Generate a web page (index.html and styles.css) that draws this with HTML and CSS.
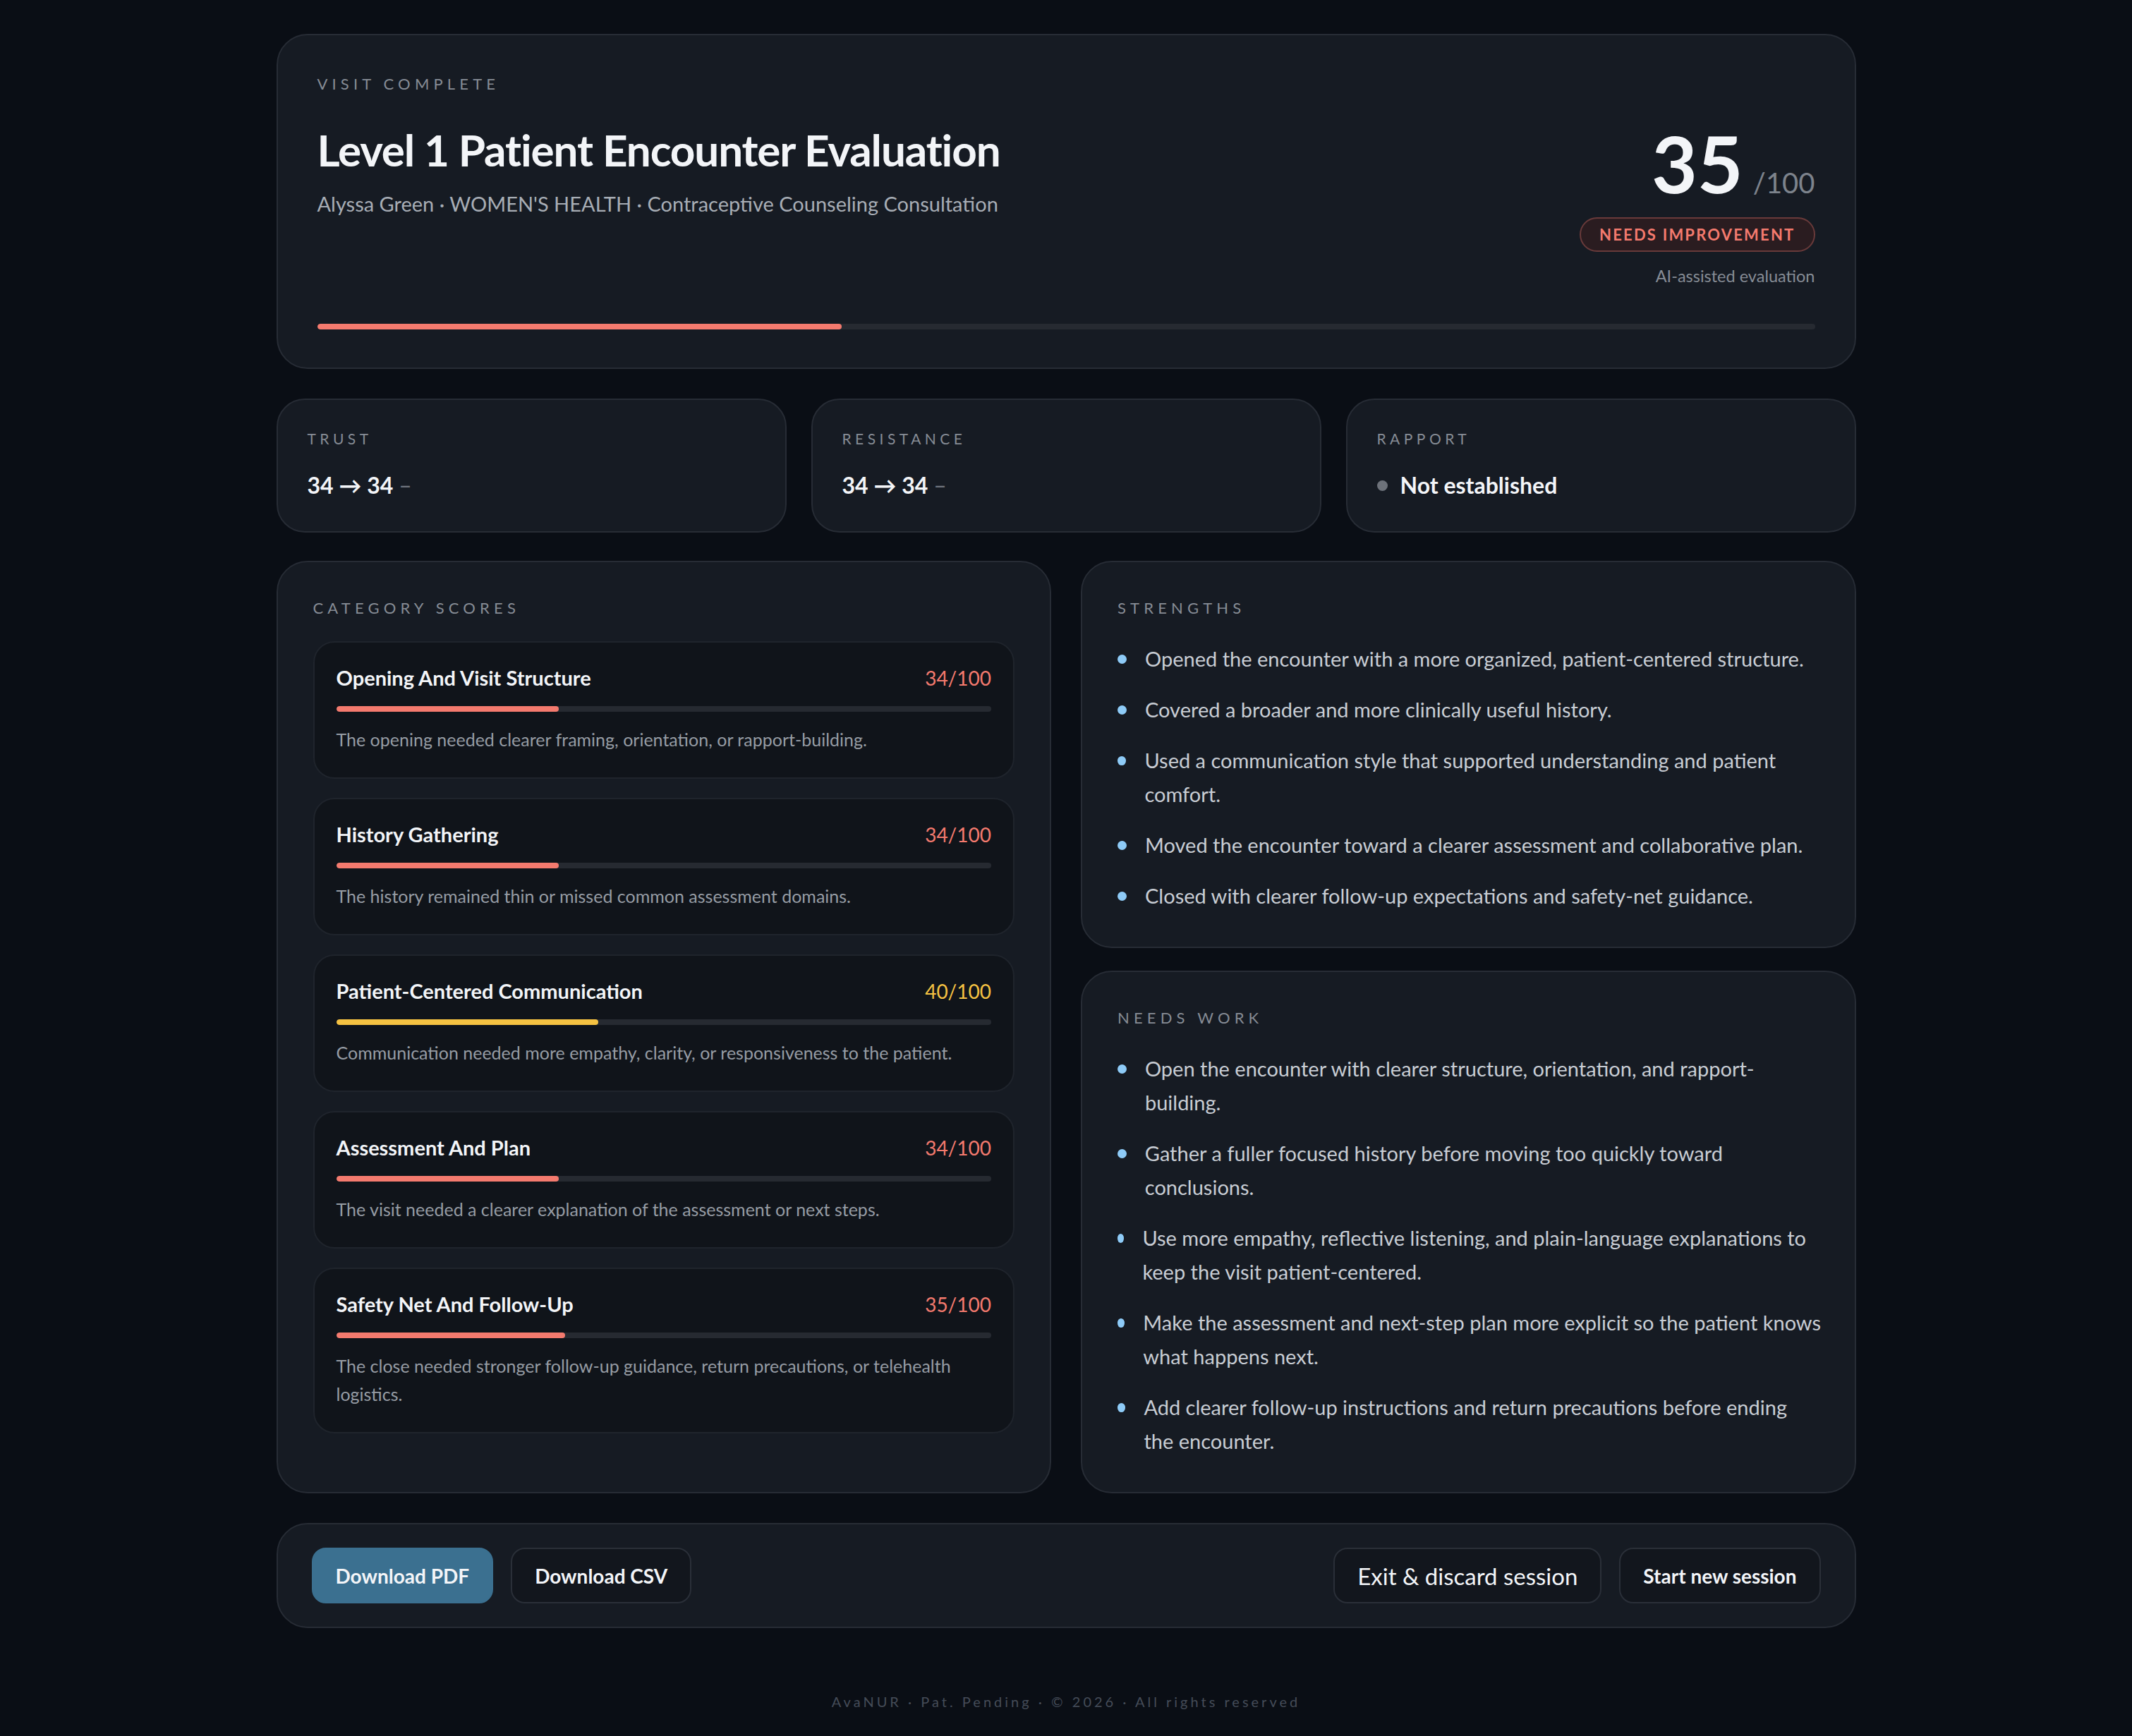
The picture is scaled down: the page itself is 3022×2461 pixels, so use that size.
FILE: index.html
```html
<!DOCTYPE html>
<html lang="en">
     <head>
          <meta charset="UTF-8">
          <meta name="viewport" content="width=device-width, initial-scale=1.0">
          <title>Visit Complete</title>
          <link rel="stylesheet" href="styles.css">
     </head>
     <body>
          <main class="page">
               <section class="card hero">
                    <div class="hero-top">
                         <div class="hero-text">
                              <div class="eyebrow eyebrow-lg">Visit complete</div>
                              <h1>Level 1 Patient Encounter Evaluation</h1>
                              <p class="hero-meta">Alyssa Green · WOMEN'S HEALTH · Contraceptive Counseling Consultation</p>
                         </div>
                         <div class="hero-score">
                              <div class="score"><span class="score-num">35</span><span class="score-max">/100</span></div>
                              <span class="badge">Needs improvement</span>
                              <div class="score-note">AI-assisted evaluation</div>
                         </div>
                    </div>
                    <div class="bar hero-bar"><div class="bar-fill red" style="width: 35%"></div></div>
               </section>

               <section class="stats">
                    <div class="card stat">
                         <div class="eyebrow">Trust</div>
                         <div class="stat-value">34 → 34 <span class="delta">–</span></div>
                    </div>
                    <div class="card stat">
                         <div class="eyebrow">Resistance</div>
                         <div class="stat-value">34 → 34 <span class="delta">–</span></div>
                    </div>
                    <div class="card stat">
                         <div class="eyebrow">Rapport</div>
                         <div class="stat-value"><span class="rapport-dot"></span>Not established</div>
                    </div>
               </section>

               <section class="columns">
                    <div class="card panel">
                         <div class="eyebrow eyebrow-lg">Category scores</div>
                         <div class="cat-list" id="catList"></div>
                    </div>
                    <div class="side">
                         <div class="card panel panel-list">
                              <div class="eyebrow eyebrow-lg">Strengths</div>
                              <ul class="bullets" id="strengthsList"></ul>
                         </div>
                         <div class="card panel panel-list">
                              <div class="eyebrow eyebrow-lg">Needs work</div>
                              <ul class="bullets" id="needsList"></ul>
                         </div>
                    </div>
               </section>

               <section class="card actions">
                    <div class="btn-group">
                         <button class="btn btn-primary">Download PDF</button>
                         <button class="btn">Download CSV</button>
                    </div>
                    <div class="btn-group">
                         <button class="btn btn-light">Exit &amp; discard session</button>
                         <button class="btn">Start new session</button>
                    </div>
               </section>

               <footer class="footer">AvaNUR · Pat. Pending · © 2026 · All rights reserved</footer>
          </main>
          <script>
          document.addEventListener('DOMContentLoaded', function () {
               const categories = [
                    { name: 'Opening And Visit Structure', score: 34, note: 'The opening needed clearer framing, orientation, or rapport-building.' },
                    { name: 'History Gathering', score: 34, note: 'The history remained thin or missed common assessment domains.' },
                    { name: 'Patient-Centered Communication', score: 40, note: 'Communication needed more empathy, clarity, or responsiveness to the patient.' },
                    { name: 'Assessment And Plan', score: 34, note: 'The visit needed a clearer explanation of the assessment or next steps.' },
                    { name: 'Safety Net And Follow-Up', score: 35, note: 'The close needed stronger follow-up guidance, return precautions, or telehealth logistics.' }
               ];
               const strengths = [
                    'Opened the encounter with a more organized, patient-centered structure.',
                    'Covered a broader and more clinically useful history.',
                    'Used a communication style that supported understanding and patient comfort.',
                    'Moved the encounter toward a clearer assessment and collaborative plan.',
                    'Closed with clearer follow-up expectations and safety-net guidance.'
               ];
               const needs = [
                    'Open the encounter with clearer structure, orientation, and rapport-building.',
                    'Gather a fuller focused history before moving too quickly toward conclusions.',
                    'Use more empathy, reflective listening, and plain-language explanations to keep the visit patient-centered.',
                    'Make the assessment and next-step plan more explicit so the patient knows what happens next.',
                    'Add clearer follow-up instructions and return precautions before ending the&nbsp;encounter.'
               ];

               const catList = document.getElementById('catList');
               categories.forEach((cat) => {
                    const tone = cat.score >= 40 ? 'yellow' : 'red';
                    const item = document.createElement('div');
                    item.className = 'cat';
                    item.innerHTML = `
                    <div class="cat-head">
                         <span class="cat-name">${cat.name}</span>
                         <span class="cat-score ${tone}-text">${cat.score}/100</span>
                    </div>
                    <div class="bar"><div class="bar-fill ${tone}" style="width: ${cat.score}%"></div></div>
                    <p class="cat-note">${cat.note}</p>`;
                    catList.appendChild(item);
               });

               function renderBullets(id, items) {
                    const list = document.getElementById(id);
                    items.forEach((text) => {
                         const li = document.createElement('li');
                         li.innerHTML = `<span class="dot"></span><span>${text}</span>`;
                         list.appendChild(li);
                    });
               }
               renderBullets('strengthsList', strengths);
               renderBullets('needsList', needs);
          });
          </script>
     </body>
</html>
```

FILE: styles.css
```css
body {
     font-family: Lato, "Noto Sans", sans-serif;
     background-color: #0a0e15;
     color: #f3f5f8;
     margin: 0;
     padding: 0;
}
.page {
     max-width: 2239px;
     margin: 0 auto;
     padding-top: 48px;
     display: flex;
     flex-direction: column;
     gap: 42px;
}
.card {
     background-color: #161b23;
     border: 2px solid #272c35;
     border-radius: 44px;
     box-sizing: border-box;
}
.eyebrow {
     font-size: 21px;
     line-height: 25px;
     letter-spacing: 0.26em;
     text-transform: uppercase;
     color: #868c95;
}
.eyebrow-lg {
     font-size: 22px;
     letter-spacing: 0.28em;
}

/* hero */
.hero {
     padding: 56px 56px 54px;
}
.hero-top {
     display: flex;
     justify-content: space-between;
     align-items: flex-start;
}
.hero h1 {
     font-size: 62px;
     font-weight: 700;
     line-height: 74px;
     margin: 44px 0 0;
     letter-spacing: -0.018em;
}
.hero-meta {
     font-size: 29px;
     line-height: 32px;
     color: #a7adb5;
     margin: 24px 0 0;
}
.hero-score {
     display: flex;
     flex-direction: column;
     align-items: flex-end;
     margin-top: 69px;
}
.score {
     display: flex;
     align-items: baseline;
     gap: 14px;
     height: 112px;
}
.score-num {
     font-size: 112px;
     font-weight: 700;
     line-height: 112px;
}
.score-max {
     font-size: 40px;
     line-height: 40px;
     color: #7d838c;
}
.badge {
     margin-top: 21px;
     padding: 0 26px;
     height: 49px;
     line-height: 45px;
     box-sizing: border-box;
     border: 2px solid #693a3a;
     border-radius: 999px;
     background-color: #2a1c20;
     color: #f47a6e;
     font-size: 22px;
     font-weight: 700;
     letter-spacing: 0.1em;
     text-transform: uppercase;
}
.score-note {
     margin-top: 21px;
     font-size: 23.5px;
     line-height: 27px;
     color: #868c95;
}
.bar {
     height: 8px;
     border-radius: 4px;
     background-color: #262a31;
     overflow: hidden;
}
.bar-fill {
     height: 100%;
     border-radius: 4px;
}
.hero-bar {
     margin-top: 54px;
}
.red {
     background-color: #f47a6e;
}
.yellow {
     background-color: #f5c242;
}
.red-text {
     color: #f47a6e;
}
.yellow-text {
     color: #f5c242;
}

/* stats */
.stats {
     display: grid;
     grid-template-columns: repeat(3, 1fr);
     gap: 35px;
}
.stat {
     padding: 42px 42px 46px;
     border-radius: 40px;
}
.stat-value {
     margin-top: 35px;
     font-size: 32px;
     line-height: 38px;
     font-weight: 700;
     display: flex;
     align-items: center;
     gap: 8px;
}
.delta {
     color: #6f757e;
     font-weight: 400;
}
.rapport-dot {
     width: 15px;
     height: 15px;
     border-radius: 50%;
     background-color: #6d727a;
     margin-right: 10px;
}

/* columns */
.columns {
     display: grid;
     grid-template-columns: 1fr 1fr;
     gap: 42px;
     margin-top: -2px;
}
.side {
     display: flex;
     flex-direction: column;
     gap: 32px;
}
.panel {
     padding: 52px 50px 48px;
}
.panel-list {
     padding-right: 40px;
}
.cat-list {
     margin-top: 35px;
     display: flex;
     flex-direction: column;
     gap: 27px;
}
.cat {
     background-color: #10141a;
     border: 2px solid #1f242c;
     border-radius: 30px;
     padding: 33px 31px 34px;
}
.cat-head {
     display: flex;
     justify-content: space-between;
     align-items: baseline;
     font-size: 28px;
     line-height: 34px;
}
.cat-name {
     font-size: 29px;
     font-weight: 700;
}
.cat .bar {
     margin-top: 23px;
}
.cat-note {
     margin: 19px 0 0;
     font-size: 25px;
     line-height: 40px;
     color: #969ca4;
}
.bullets {
     list-style: none;
     margin: 36px 0 0;
     padding: 0;
     display: flex;
     flex-direction: column;
     gap: 24px;
}
.bullets li {
     display: flex;
     align-items: flex-start;
     gap: 26px;
     font-size: 29px;
     line-height: 48px;
     color: #c8cdd4;
}
.dot {
     width: 13px;
     height: 13px;
     margin-top: 18px;
     border-radius: 50%;
     background-color: #8ecbf7;
}

/* actions */
.actions {
     display: flex;
     justify-content: space-between;
     align-items: center;
     padding: 33px 48px;
     border-radius: 44px;
}
.btn-group {
     display: flex;
     gap: 25px;
}
.btn {
     font-family: inherit;
     font-size: 28px;
     font-weight: 700;
     color: #f3f5f8;
     height: 79px;
     padding: 0 32px;
     border-radius: 20px;
     border: 2px solid #2a2f38;
     background-color: #12161d;
     cursor: pointer;
}
.btn-primary {
     background-color: #3b7090;
     border-color: #3b7090;
}
.btn-light {
     font-size: 33px;
     font-weight: 400;
}

.footer {
     margin-top: 50px;
     text-align: center;
     font-size: 20px;
     letter-spacing: 0.2em;
     color: #454c58;
}
```
